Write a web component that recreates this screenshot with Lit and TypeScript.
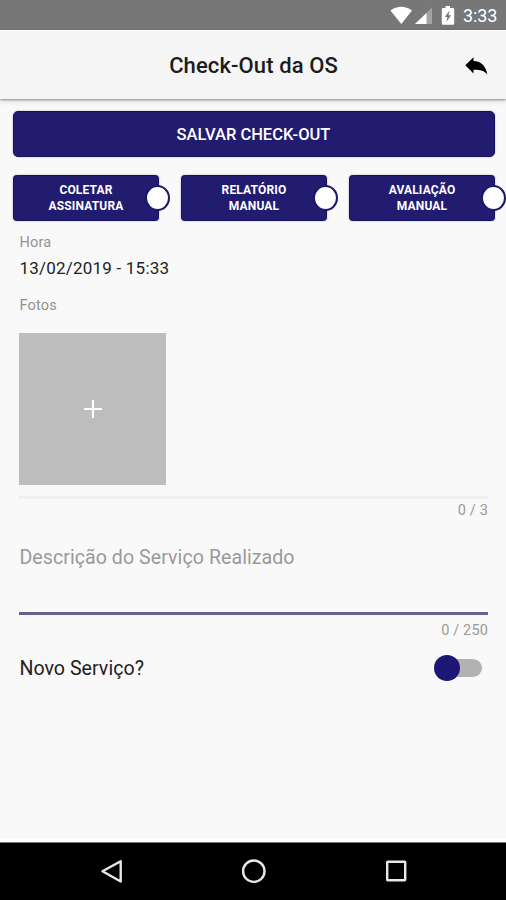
import { LitElement, html, css } from "lit";
import { customElement, property } from "lit/decorators.js";

@customElement("action-button")
class ActionButton extends LitElement {
  @property({ type: Array }) lines: string[] = [];

  static styles = css`
    :host { display: block; width: 146px; }
    .button {
      position: relative; display: flex; flex-direction: column; align-items: center; justify-content: center;
      box-sizing: border-box; height: 46px; border: 1px solid #15105c; border-radius: 3.5px;
      background: #221c70; color: #fff; font: 700 12px/16.5px Roboto, sans-serif; letter-spacing: 0.17px;
      box-shadow: 0 0 2px rgba(20, 20, 90, 0.35);
    }
    .badge {
      position: absolute; right: -12px; top: 9px; box-sizing: border-box; width: 25px; height: 26px;
      border: 2px solid #1d1769; border-radius: 50%; background: #fff;
    }
  `;

  render() {
    return html`<div class="button">
      ${this.lines.map((line) => html`<span>${line}</span>`)}
      <i class="badge"></i>
    </div>`;
  }
}

@customElement("app-root")
class AppRoot extends LitElement {
  static styles = css`
    :host {
      display: flex; flex-direction: column; width: 506px; height: 900px; overflow: hidden;
      background: #f9f9f9; color: #222; font-family: Roboto, sans-serif;
    }
    svg { display: block; }
    .status {
      display: flex; align-items: center; justify-content: flex-end; flex: none; box-sizing: border-box;
      height: 30px; padding-right: 9px; background: #777; color: #fff;
    }
    .status svg { width: 66px; height: 30px; }
    .time { width: 34px; margin-left: 8px; padding-top: 2px; font-size: 18px; line-height: 28px; white-space: nowrap; letter-spacing: -0.1px; }
    .header {
      position: relative; display: grid; grid-template-columns: 1fr auto 1fr; align-items: center; flex: none;
      box-sizing: border-box; height: 69px; padding: 0 18px; border-top: 1px solid #fff;
      background: #f5f5f5; box-shadow: 0 1px 2px rgba(0, 0, 0, 0.38), 0 2px 6px rgba(0, 0, 0, 0.12);
    }
    .title { grid-column: 2; margin: 0; padding: 1px 0 0 1px; font-size: 22px; font-weight: 500; line-height: 28px; letter-spacing: 0.1px; color: #1c1c1c; }
    .back { justify-self: end; margin-top: 2px; }
    .content { display: flex; flex-direction: column; flex: 1; padding-top: 12px; }
    .save {
      display: flex; align-items: center; justify-content: center; box-sizing: border-box; height: 46px;
      margin: 0 11.5px 0 12.5px; border: 1px solid #15105c; border-radius: 5px; background: #221c70; color: #fff;
      font-size: 16.5px; font-weight: 500; box-shadow: 0 0 2px rgba(20, 20, 90, 0.35);
    }
    .actions { display: flex; gap: 22px; margin: 18px 0 0 13px; }
    .form { display: flex; flex-direction: column; padding: 0 18px 0 19.4px; }
    .label { margin-top: 13px; font-size: 14.5px; line-height: 18px; letter-spacing: 0.2px; color: #929292; }
    .value { margin-top: 5px; font-size: 17px; line-height: 22px; letter-spacing: 0.22px; }
    .photos { margin-top: 18px; }
    .photo { display: grid; place-items: center; width: 146.5px; height: 152px; margin: 18px 0 11px; background: #bdbdbd; }
    .rule { height: 3px; background: #efefef; }
    .count { margin-top: 2px; text-align: right; font-size: 14.5px; line-height: 20px; color: #999; letter-spacing: 0.15px; }
    .field { margin-top: 24px; height: 67px; border-bottom: 3px solid #66608f; color: #999; font-size: 19.6px; line-height: 26px; letter-spacing: 0.05px; }
    .field-count { margin-top: 6px; }
    .option { display: flex; align-items: center; justify-content: space-between; height: 30px; margin-top: 12px; padding-right: 6px; font-size: 19.6px; letter-spacing: 0.03px; }
    .toggle { position: relative; width: 48px; height: 18px; }
    .track { width: 40px; height: 18px; margin-left: 8px; border-radius: 9px; background: #b2b2b2; }
    .knob { position: absolute; left: 0; top: -4px; width: 26px; height: 26px; border-radius: 50%; background: #1e1674; }
    .nav { flex: none; height: 58px; background: #000; border-top: 1px solid #777; box-sizing: border-box; box-shadow: 0 -3px 0 #fff; }
  `;

  render() {
    const actions = [["COLETAR", "ASSINATURA"], ["RELATÓRIO", "MANUAL"], ["AVALIAÇÃO", "MANUAL"]];
    return html`
      <div class="status">
        <svg viewBox="389 0 66 30">
          <path d="M390.5 10.5Q401.3 3 412 10.5L401.3 24Z" fill="#fff" />
          <path d="M415 24 432 7.5V24Z" fill="#a4a4a4" />
          <path d="M415 24 426.500 13V24Z" fill="#fff" />
          <path d="M445.5 6h4.5v2h3q1.2 0 1.2 1.2V23.5q0 1.2-1.2 1.2H443q-1.2 0-1.2-1.2V9.2Q441.800 8 443 8h2.500Z" fill="#fff" />
          <path d="M449.600 10.500 444.800 17h2.600l-1.100 5 4.900-6.700h-2.700Z" fill="#777" />
        </svg>
        <span class="time">3:33</span>
      </div>
      <header class="header">
        <h1 class="title">Check-Out da OS</h1>
        <svg class="back" width="23" height="18" viewBox="0 0 23 18">
          <path d="M8.500 .3V4C16.500 4.200 21 9.500 22.300 17.300 19.300 13.600 15.200 12.600 8.500 12.700V16.400L.3 8.300Z" fill="#000" />
        </svg>
      </header>
      <main class="content">
        <div class="save">SALVAR CHECK-OUT</div>
        <div class="actions">${actions.map((a) => html`<action-button .lines=${a}></action-button>`)}</div>
        <section class="form">
          <div class="label">Hora</div>
          <div class="value">13/02/2019 - 15:33</div>
          <div class="label photos">Fotos</div>
          <div class="photo">
            <svg width="18" height="18" viewBox="0 0 18 18"><path d="M9 0V18M0 9H18" stroke="#fff" stroke-width="2.200" /></svg>
          </div>
          <div class="rule"></div>
          <div class="count">0 / 3</div>
          <div class="field">Descrição do Serviço Realizado</div>
          <div class="count field-count">0 / 250</div>
          <div class="option">
            <span>Novo Serviço?</span>
            <div class="toggle"><div class="track"></div><i class="knob"></i></div>
          </div>
        </section>
      </main>
      <nav class="nav">
        <svg width="506" height="57" viewBox="0 843 506 57" fill="none" stroke="#e8e8e8" stroke-width="2.400">
          <path d="M120.700 861.200V881.500L102.500 871.300Z" stroke-linejoin="round" />
          <circle cx="253.800" cy="871.200" r="10.700" />
          <rect x="387.200" y="861.700" width="18" height="18.500" rx=".5" />
        </svg>
      </nav>
    `;
  }
}
